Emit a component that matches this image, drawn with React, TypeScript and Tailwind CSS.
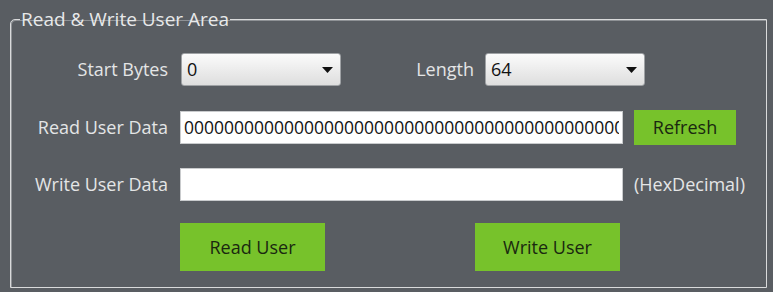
import React from "react"

const font = { fontFamily: '"Open Sans", "Liberation Sans", sans-serif' }

function Caret() {
  return (
    <svg width="11" height="6" viewBox="0 0 11 6" className="shrink-0">
      <path d="M0 0 H11 L5.5 6 Z" fill="#111" />
    </svg>
  )
}

function Select({ value }: { value: string }) {
  return (
    <div className="w-[160px] h-[33px] flex items-center justify-between pl-[5px] pr-[7px] rounded-[3px] border border-[#9fa2a5] bg-gradient-to-b from-[#fbfbfb] to-[#dedede] text-[18px] text-[#111]">
      <span>{value}</span>
      <Caret />
    </div>
  )
}

function GreenButton({ label, className }: { label: string; className: string }) {
  return (
    <button className={`bg-[#77c22b] text-[#1a2810] text-[18px] flex items-center justify-center ${className}`}>
      {label}
    </button>
  )
}

export default function App() {
  return (
    <div style={font} className="w-[773px] h-[292px] bg-[#595d62] pt-[9px] pl-[10px] text-[#e4e5e6] text-[18px]">
      <fieldset className="w-[757px] h-[279px] border border-[#d9dadb] rounded-tl-[5px] shadow-[inset_1px_1px_0_#8e9195]">
        <legend className="ml-[9px] px-[1px] text-[19px] leading-[20px] text-[#e8e9ea]">Read &amp; Write User Area</legend>

        {/* Start bytes / length */}
        <div className="flex items-center mt-[24px] h-[33px]">
          <div className="w-[157px] text-right">Start Bytes</div>
          <div className="ml-[13px]"><Select value="0" /></div>
          <div className="w-[133px] text-right">Length</div>
          <div className="ml-[11px]"><Select value="64" /></div>
        </div>

        {/* Read user data */}
        <div className="flex items-center mt-[24px] h-[35px]">
          <div className="w-[157px] text-right">Read User Data</div>
          <div className="ml-[12px] w-[443px] h-[33px] bg-white border border-[#c9cbcd] flex items-center pl-[3px] pr-[3px]">
            <div className="overflow-hidden w-full">
              <span className="block text-[17.5px] text-[#111] whitespace-nowrap w-max">00000000000000000000000000000000000000000000</span>
            </div>
          </div>
          <GreenButton label="Refresh" className="ml-[11px] w-[102px] h-[35px]" />
        </div>

        {/* Write user data */}
        <div className="flex items-center mt-[23px] h-[33px]">
          <div className="w-[157px] text-right">Write User Data</div>
          <div className="ml-[12px] w-[443px] h-[33px] bg-white border border-[#c9cbcd]" />
          <div className="ml-[11px]">(HexDecimal)</div>
        </div>

        {/* Action buttons */}
        <div className="flex items-center mt-[22px]">
          <GreenButton label="Read User" className="ml-[169px] w-[145px] h-[48px]" />
          <GreenButton label="Write User" className="ml-[150px] w-[145px] h-[48px]" />
        </div>
      </fieldset>
    </div>
  )
}
